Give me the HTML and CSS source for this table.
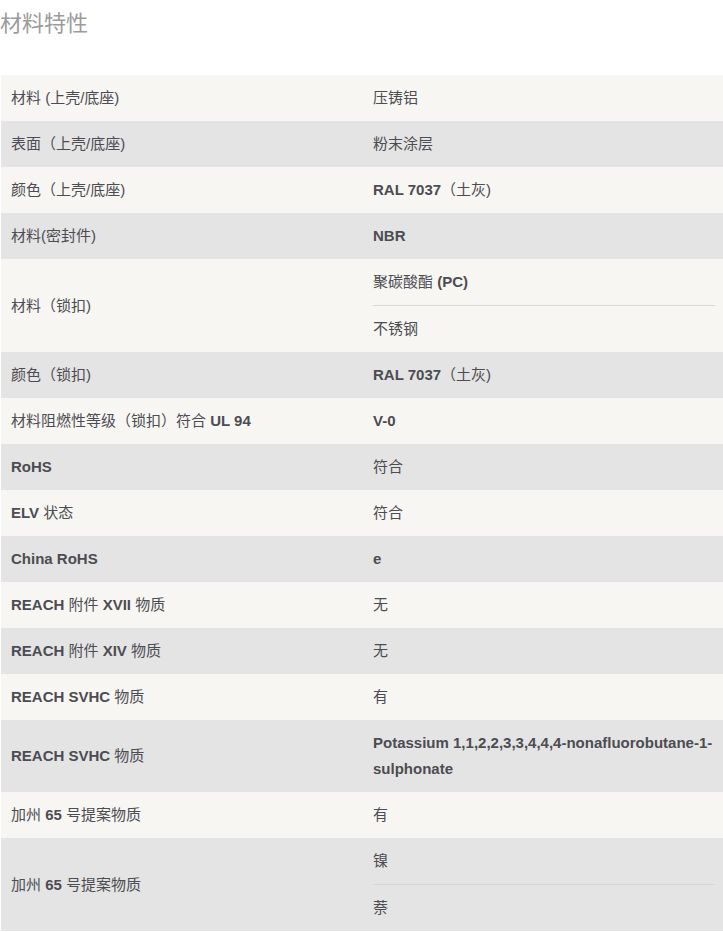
FILE: index.html
```html
<!DOCTYPE html>
<html lang="zh-CN">
<head>
<meta charset="utf-8">
<title>材料特性</title>
<link rel="stylesheet" href="styles.css">
</head>
<body>
<h2 class="title">材料特性</h2>
<div class="table">
  <div class="row"><div class="label"><span>材料 (上壳/底座)</span></div><div class="value"><div class="v">压铸铝</div></div></div>
  <div class="row"><div class="label"><span>表面（上壳/底座)</span></div><div class="value"><div class="v">粉末涂层</div></div></div>
  <div class="row"><div class="label"><span>颜色（上壳/底座)</span></div><div class="value"><div class="v"><b>RAL 7037</b>（土灰)</div></div></div>
  <div class="row"><div class="label"><span>材料(密封件)</span></div><div class="value"><div class="v"><b>NBR</b></div></div></div>
  <div class="row"><div class="label"><span>材料（锁扣)</span></div><div class="value"><div class="v">聚碳酸酯 <b>(PC)</b></div><div class="v">不锈钢</div></div></div>
  <div class="row"><div class="label"><span>颜色（锁扣)</span></div><div class="value"><div class="v"><b>RAL 7037</b>（土灰)</div></div></div>
  <div class="row"><div class="label"><span>材料阻燃性等级（锁扣）符合 <b>UL 94</b></span></div><div class="value"><div class="v"><b>V-0</b></div></div></div>
  <div class="row"><div class="label"><span><b>RoHS</b></span></div><div class="value"><div class="v">符合</div></div></div>
  <div class="row"><div class="label"><span><b>ELV</b> 状态</span></div><div class="value"><div class="v">符合</div></div></div>
  <div class="row"><div class="label"><span><b>China RoHS</b></span></div><div class="value"><div class="v"><b>e</b></div></div></div>
  <div class="row"><div class="label"><span><b>REACH</b> 附件 <b>XVII</b> 物质</span></div><div class="value"><div class="v">无</div></div></div>
  <div class="row"><div class="label"><span><b>REACH</b> 附件 <b>XIV</b> 物质</span></div><div class="value"><div class="v">无</div></div></div>
  <div class="row"><div class="label"><span><b>REACH SVHC</b> 物质</span></div><div class="value"><div class="v">有</div></div></div>
  <div class="row"><div class="label"><span><b>REACH SVHC</b> 物质</span></div><div class="value"><div class="v"><b>Potassium 1,1,2,2,3,3,4,4,4-nonafluorobutane-1-sulphonate</b></div></div></div>
  <div class="row"><div class="label"><span>加州 <b>65</b> 号提案物质</span></div><div class="value"><div class="v">有</div></div></div>
  <div class="row"><div class="label"><span>加州 <b>65</b> 号提案物质</span></div><div class="value"><div class="v">镍</div><div class="v">萘</div></div></div>
</div>
</body>
</html>
```
FILE: styles.css
```css
html, body {
  margin: 0;
  padding: 0;
  background: #ffffff;
}
body {
  font-family: "Liberation Sans", "Noto Sans CJK SC", sans-serif;
  color: #4c4c52;
  font-size: 15px;
}
.title {
  margin: 0;
  padding: 9px 0 0 0;
  height: 75px;
  box-sizing: border-box;
  font-size: 22px;
  line-height: 30px;
  font-weight: normal;
  color: #9b9b9b;
}
.table {
  margin-left: 1px;
}
.row {
  display: grid;
  grid-template-columns: 361px 1fr;
}
.row:nth-child(odd) {
  background: #f7f6f2;
}
.row:nth-child(even) {
  background: #e4e4e4;
}
.label {
  display: flex;
  align-items: center;
  padding: 10px 10px 10px 10px;
  line-height: 26px;
}
.label b, .v b {
  font-weight: bold;
}
.value {
  display: flex;
  flex-direction: column;
  padding: 0 8px 0 11px;
}
.v {
  padding: 10px 0;
  line-height: 26px;
}
.v + .v {
  border-top: 1px solid #d8d8d8;
}
```
